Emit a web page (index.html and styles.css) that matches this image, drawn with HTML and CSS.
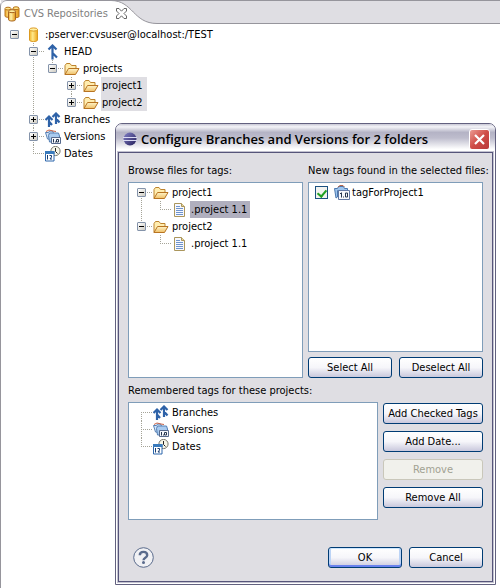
FILE: index.html
```html
<!DOCTYPE html>
<html lang="en">
<head>
<meta charset="utf-8">
<title>CVS Repositories</title>
<link rel="stylesheet" href="styles.css">
</head>
<body>
<svg class="sprite" aria-hidden="true">
  <defs>
    <linearGradient id="gold" x1="0" x2="1" y1="0" y2="0"><stop offset="0" stop-color="#f0a828"/><stop offset=".35" stop-color="#fff2a8"/><stop offset="1" stop-color="#e29410"/></linearGradient>
    <linearGradient id="cyl" x1="0" x2="1" y1="0" y2="0"><stop offset="0" stop-color="#f2b42c"/><stop offset=".4" stop-color="#ffe98c"/><stop offset="1" stop-color="#eda51c"/></linearGradient>
    <linearGradient id="sand" x1="0" x2="0" y1="0" y2="1"><stop offset="0" stop-color="#fff4c8"/><stop offset="1" stop-color="#efc068"/></linearGradient>
    <linearGradient id="orb" x1="0" x2="1" y1="0" y2="1"><stop offset="0" stop-color="#8482c8"/><stop offset="1" stop-color="#221c58"/></linearGradient>
  </defs>
  <symbol id="i-repo" viewBox="0 0 16 16">
    <path d="M3.500 2.500v10.500c0 2 8 2 8 0v-10.500" fill="url(#cyl)" stroke="#dc9a20"/>
    <ellipse cx="7.500" cy="2.500" rx="4" ry="1.600" fill="#fff0a4" stroke="#dc9a20"/>
  </symbol>
  <symbol id="i-repos" viewBox="0 0 16 16">
    <path d="M1 3v7c0 1.700 6 1.700 6 0V3M9 2.500v8c0 1.500 6 1.500 6 0v-8" fill="url(#gold)" stroke="#b8741c"/>
    <ellipse cx="4" cy="2.600" rx="3" ry="1.400" fill="#ffe68a" stroke="#b8741c"/>
    <ellipse cx="12" cy="2.200" rx="3" ry="1.400" fill="#ffe68a" stroke="#b8741c"/>
    <path d="M4.500 5.500v8c0 2 7 2 7 0v-8" fill="url(#gold)" stroke="#a8621c"/>
    <ellipse cx="8" cy="5.200" rx="3.500" ry="1.500" fill="#fff0a0" stroke="#a8621c"/>
  </symbol>
  <symbol id="i-head" viewBox="0 0 16 16">
    <path d="M7.500 15.500V2M3.500 5.500l4-4 4 4M7.500 7.500v1.500l4.500 4.500" fill="none" stroke="#2e62a8" stroke-width="2.200"/>
  </symbol>
  <symbol id="i-branches" viewBox="0 0 16 16">
    <path d="M4 15V5M.5 8L4 4.500 7.500 8M4 9.500l3 3.500M11 12V2M7.500 5L11 1.500 14.500 5M11 6.500l3.500 4" fill="none" stroke="#2e62a8" stroke-width="2.200"/>
  </symbol>
  <symbol id="i-folder" viewBox="0 0 16 16">
    <path d="M1 13.500v-9l1.500-2H6l1.500 2H12v3" fill="#ffedb0" stroke="#bd832c"/>
    <path d="M1 13.500l3.500-6H15l-3.500 6z" fill="url(#sand)" stroke="#b87422"/>
  </symbol>
  <symbol id="i-versions" viewBox="0 0 16 16">
    <path d="M.5 3.500h3l1-1.500h3l1 2v7l-6-1z" fill="#d5e5f8" stroke="#5680b4"/>
    <path d="M1 2.500l3-1.500 4 1 3 .5" fill="none" stroke="#c86448"/>
    <path d="M3.500 6.500l1-2.500h9l1 3v6h-10z" fill="#a9cbf0" stroke="#5680b4"/>
    <path d="M6.500 8.500h9v6h-9z" fill="#f4f7fc" stroke="#56698c"/>
    <path d="M8.500 10v3.500M13 10.500h-1.500v2.500H13.500v-2.500H12" fill="none" stroke="#26364f"/>
    <path d="M10 12.500h1v1h-1z" fill="#26364f"/>
  </symbol>
  <symbol id="i-tag" viewBox="0 0 16 16">
    <path d="M.5 3.500h3l1-2h5l1 2h3v2H3.500v6.500l-1.500 1z" fill="#9cc4ee" stroke="#4c78ae"/>
    <path d="M4 2l2-1.500h3L10.500 2" fill="none" stroke="#b5664a"/>
    <path d="M4.500 5.500h11v9h-11z" fill="#f6f8fc" stroke="#6278a4"/>
    <path d="M7.500 7.500v5M6 8.500h1M11.500 8h2v4h-2z" fill="none" stroke="#26364f"/>
    <path d="M9 11.500h1v1H9z" fill="#26364f"/>
  </symbol>
  <symbol id="i-dates" viewBox="0 0 16 16">
    <circle cx="10.500" cy="5" r="4.600" fill="#f7f6e8" stroke="#77776c"/>
    <path d="M10.500 2v3.500l2 2" fill="none" stroke="#222"/>
    <path d="M.5 5.500h8.500v9.500H.5z" fill="#fff" stroke="#2c67ac"/>
    <path d="M0 5h9.500v3H0z" fill="#397abc"/>
    <path d="M2.500 9v4.500M4.500 9.500h2v1.500l-1.500 2H7" fill="none" stroke="#173d72"/>
  </symbol>
  <symbol id="i-file" viewBox="0 0 16 16">
    <path d="M2.500 1.500h7l3 3v10H2.500z" fill="#f6f8ff" stroke="#ab965c"/>
    <path d="M9.500 1.500v3h3" fill="#e8d59c" stroke="#ab965c"/>
    <path d="M4 4.500h4M4 6.500h7M4 8.500h7M4 10.500h7M4 12.500h7" stroke="#6f94cc"/>
  </symbol>
  <symbol id="i-eclipse" viewBox="0 0 16 16">
    <circle cx="8" cy="8" r="6.500" fill="url(#orb)"/>
    <path d="M1 6.500h14M1 9.500h14" stroke="#dcdcf4"/>
  </symbol>
</svg>

<main class="view">
  <header class="tabs">
    <div class="tab">
      <svg class="icon"><use href="#i-repos"/></svg>
      <span>CVS Repositories</span>
      <button class="tab-close" aria-label="Close view"><svg viewBox="0 0 11 11"><path d="M.5.5h2.500l2.500 2.700L8 .5h2.500v2.500L8 5.500 10.500 8v2.500H8L5.500 7.800 3 10.500H.5V8L3 5.500.5 3z" fill="#fff" stroke="#666"/></svg></button>
    </div>
    <svg class="tab-curve" viewBox="0 0 46 24"><path d="M0 0C22 0 22 23.500 46 23.500V0z" fill="#dfdee3"/><path d="M46 .5H0C22 .5 22 23.500 46 23.500" fill="none" stroke="#96959c"/></svg>
    <div class="tab-rest"></div>
  </header>

  <ul class="tree repo-tree">
    <li><div class="row root"><button class="toggle" aria-label="Collapse"></button><svg class="icon"><use href="#i-repo"/></svg><span class="label">:pserver:cvsuser@localhost:/TEST</span></div>
      <ul>
        <li><div class="row"><button class="toggle" aria-label="Collapse"></button><svg class="icon"><use href="#i-head"/></svg><span class="label">HEAD</span></div>
          <ul>
            <li><div class="row"><button class="toggle" aria-label="Collapse"></button><svg class="icon"><use href="#i-folder"/></svg><span class="label">projects</span></div>
              <ul>
                <li><div class="row"><button class="toggle closed" aria-label="Expand"></button><svg class="icon"><use href="#i-folder"/></svg><span class="label marked">project1</span></div></li>
                <li><div class="row"><button class="toggle closed" aria-label="Expand"></button><svg class="icon"><use href="#i-folder"/></svg><span class="label marked">project2</span></div></li>
              </ul>
            </li>
          </ul>
        </li>
        <li><div class="row"><button class="toggle closed" aria-label="Expand"></button><svg class="icon"><use href="#i-branches"/></svg><span class="label">Branches</span></div></li>
        <li><div class="row"><button class="toggle closed" aria-label="Expand"></button><svg class="icon"><use href="#i-versions"/></svg><span class="label">Versions</span></div></li>
        <li><div class="row"><span class="leaf"></span><svg class="icon"><use href="#i-dates"/></svg><span class="label">Dates</span></div></li>
      </ul>
    </li>
  </ul>
</main>

<section class="dialog" role="dialog" aria-labelledby="dialog-title">
  <header class="titlebar">
    <svg class="icon"><use href="#i-eclipse"/></svg>
    <h1 id="dialog-title">Configure Branches and Versions for 2 folders</h1>
    <button class="close" aria-label="Close"><svg viewBox="0 0 19 19"><path d="M5 5l9 9M14 5l-9 9" stroke="#fff" stroke-width="2.200"/></svg></button>
  </header>
  <div class="body">
    <div class="columns">
      <section class="column">
        <h2>Browse files for tags:</h2>
        <ul class="tree pane">
          <li><div class="row"><button class="toggle" aria-label="Collapse"></button><svg class="icon"><use href="#i-folder"/></svg><span class="label">project1</span></div>
            <ul><li><div class="row"><span class="leaf"></span><svg class="icon"><use href="#i-file"/></svg><span class="label selected">.project 1.1</span></div></li></ul>
          </li>
          <li><div class="row"><button class="toggle" aria-label="Collapse"></button><svg class="icon"><use href="#i-folder"/></svg><span class="label">project2</span></div>
            <ul><li><div class="row"><span class="leaf"></span><svg class="icon"><use href="#i-file"/></svg><span class="label">.project 1.1</span></div></li></ul>
          </li>
        </ul>
      </section>
      <section class="column">
        <h2>New tags found in the selected files:</h2>
        <div class="pane checklist">
          <label class="check"><input type="checkbox" checked><svg class="icon"><use href="#i-tag"/></svg><span>tagForProject1</span></label>
        </div>
        <div class="pair">
          <button class="btn">Select All</button>
          <button class="btn">Deselect All</button>
        </div>
      </section>
    </div>
    <h2>Remembered tags for these projects:</h2>
    <div class="remembered">
      <ul class="tree pane">
        <li><div class="row"><span class="leaf"></span><svg class="icon"><use href="#i-branches"/></svg><span class="label">Branches</span></div></li>
        <li><div class="row"><span class="leaf"></span><svg class="icon"><use href="#i-versions"/></svg><span class="label">Versions</span></div></li>
        <li><div class="row"><span class="leaf"></span><svg class="icon"><use href="#i-dates"/></svg><span class="label">Dates</span></div></li>
      </ul>
      <div class="actions">
        <button class="btn">Add Checked Tags</button>
        <button class="btn">Add Date...</button>
        <button class="btn" disabled>Remove</button>
        <button class="btn">Remove All</button>
      </div>
    </div>
    <footer class="footer">
      <button class="help" aria-label="Help"><svg viewBox="0 0 21 21"><circle cx="10.500" cy="10.500" r="9.800" fill="#f1f1f4" stroke="#5a6b8c"/><path d="M6.800 8.200c0-4.400 7.400-4.400 7.400 0 0 2.600-3.700 2.400-3.700 5" fill="none" stroke="#5a6b8c" stroke-width="2.400"/><circle cx="10.500" cy="15.600" r="1.500" fill="#5a6b8c"/></svg></button>
      <button class="btn default">OK</button>
      <button class="btn">Cancel</button>
    </footer>
  </div>
</section>
</body>
</html>
```
FILE: styles.css
```css
* {
  box-sizing: border-box;
}

body {
  margin: 0;
  background: #fff;
  color: #000;
  font: 11px/17px "DejaVu Sans Condensed", "DejaVu Sans", sans-serif;
}

button {
  margin: 0;
  padding: 0;
  border: 0;
  background: none;
  color: inherit;
  font: inherit;
}

h1,
h2 {
  margin: 0;
  font: inherit;
  white-space: nowrap;
}

svg {
  display: block;
}

.sprite {
  position: absolute;
  width: 0;
  height: 0;
}

.icon {
  flex: none;
  width: 16px;
  height: 16px;
}

/* Repositories view */

.view {
  min-height: 100vh;
  border-left: 1px solid #96959c;
  border-top-left-radius: 6px;
}

.tabs {
  display: flex;
  height: 24px;
  background: #dfdee3;
}

.tab {
  display: flex;
  align-items: center;
  gap: 4px;
  padding: 2px 30px 0 3px;
  border-top: 1px solid #96959c;
  border-top-left-radius: 6px;
  background: #fff;
  color: #808080;
  white-space: nowrap;
}

.tab-close {
  margin-left: 4px;
}

.tab-close svg {
  width: 11px;
  height: 11px;
}

.tab-curve {
  flex: none;
  width: 46px;
  height: 24px;
  margin-left: -46px;
}

.tab-rest {
  flex: 1;
  border-top: 1px solid #96959c;
  border-bottom: 1px solid #96959c;
}

/* Trees */

.tree,
.tree ul {
  margin: 0;
  padding: 0;
  list-style: none;
}

.tree ul {
  padding-left: 19px;
}

.repo-tree {
  padding: 2px 0 0 9px;
}

.tree li {
  position: relative;
}

.tree li::before {
  content: "";
  position: absolute;
  left: 4px;
  top: 0;
  bottom: 0;
  width: 1px;
  background: repeating-linear-gradient(#a5a498 0 1px, #fff 1px 2px);
}

.tree li:last-child::before {
  bottom: auto;
  height: 9px;
}

.tree > li:first-child::before {
  top: 8px;
}

.tree > li:only-child::before {
  display: none;
}

.row {
  position: relative;
  display: flex;
  align-items: center;
  height: 17px;
}

.row::before {
  content: "";
  position: absolute;
  left: 4px;
  top: 8px;
  width: 12px;
  height: 1px;
  background: repeating-linear-gradient(90deg, #a5a498 0 1px, #fff 1px 2px);
}

.root::before {
  display: none;
}

.toggle,
.leaf {
  flex: none;
  width: 9px;
  height: 9px;
  margin-right: 7px;
}

.toggle {
  position: relative;
  border: 1px solid #8493aa;
  border-radius: 1px;
  background:
    linear-gradient(#000, #000) center / 5px 1px no-repeat,
    linear-gradient(135deg, #fff, #cfccc2);
}

.toggle.closed {
  background:
    linear-gradient(#000, #000) center / 5px 1px no-repeat,
    linear-gradient(#000, #000) center / 1px 5px no-repeat,
    linear-gradient(135deg, #fff, #cfccc2);
}

.label {
  margin-left: 2px;
  padding: 0 1px;
  white-space: nowrap;
}

.marked {
  padding-right: 4px;
  background: #dfdee3;
}

.selected {
  padding-right: 3px;
  background: #b0afbe;
}

/* Dialog window */

.dialog {
  position: absolute;
  top: 123px;
  left: 115px;
  right: 4px;
  border: 1px solid #62617f;
  border-radius: 7px 7px 0 0;
  background: #fff;
}

.titlebar {
  display: flex;
  align-items: center;
  gap: 3px;
  height: 28px;
  padding: 2px 5px 0 6px;
  border-radius: 6px 6px 0 0;
  background: linear-gradient(#c9c8d5, #f4f4f8 10%, #b4b3c5 30%, #bebdcd 50%, #fff 90%);
}

.titlebar h1 {
  flex: 1;
  font: 600 13px/20px "Open Sans", sans-serif;
}

.close {
  width: 21px;
  height: 21px;
  border: 1px solid #fff;
  border-radius: 3px;
  background: linear-gradient(135deg, #ec9a92, #cf4d47 50%, #b93a3c);
}

.close svg {
  width: 19px;
  height: 19px;
}

.body {
  margin: 0 2px 2px;
  padding: 9px 9px 13px;
  border: 1px solid #56557a;
  background: #dfdee3;
  box-shadow: 0 0 0 1px #c3c2d0;
}

.body h2 {
  margin-bottom: 3px;
}

.columns {
  display: grid;
  grid-template-columns: 1fr 1fr;
  gap: 5px;
  margin-bottom: 4px;
}

.column {
  display: flex;
  flex-direction: column;
  min-width: 0;
}

.pane {
  flex: 1;
  border: 1px solid #7f9db9;
  background: #fff;
}

.tree.pane {
  min-height: 118px;
  padding: 1px 8px;
}

.column .tree.pane {
  min-height: 196px;
}

.checklist {
  padding: 1px 6px;
}

.check {
  display: flex;
  align-items: center;
  gap: 2px;
}

.check input {
  appearance: none;
  width: 13px;
  height: 13px;
  margin: 0 4px 0 0;
  border: 1px solid #1c5180;
  background: #f3f3ef;
}

.check input:checked::before {
  content: "";
  display: block;
  width: 4px;
  height: 7px;
  margin: 1px 0 0 3px;
  border: solid #21a121;
  border-width: 0 2px 2px 0;
  transform: rotate(40deg);
}

.pair {
  display: grid;
  grid-template-columns: 1fr 1fr;
  gap: 7px;
  margin-top: 5px;
}

.btn {
  height: 21px;
  border: 1px solid #003c74;
  border-radius: 3px;
  background: linear-gradient(#fff, #f6f6fa 50%, #c9c8dc);
  line-height: 19px;
  white-space: nowrap;
}

.btn:disabled {
  border-color: #c9c7ba;
  background: #f1f1ec;
  color: #a1a192;
}

.default {
  box-shadow: inset 0 1px #cee7ff, inset 0 -2px #6982ee, inset 2px 0 #bcd4f6, inset -2px 0 #bcd4f6;
}

.remembered {
  display: flex;
  gap: 5px;
}

.actions {
  display: flex;
  flex-direction: column;
  gap: 7px;
  width: 100px;
  padding-top: 1px;
}

.footer {
  display: flex;
  align-items: center;
  gap: 7px;
  margin-top: 27px;
}

.footer .btn {
  width: 74px;
}

.help {
  margin: 0 auto 0 5px;
}

.help svg {
  width: 21px;
  height: 21px;
}
```
